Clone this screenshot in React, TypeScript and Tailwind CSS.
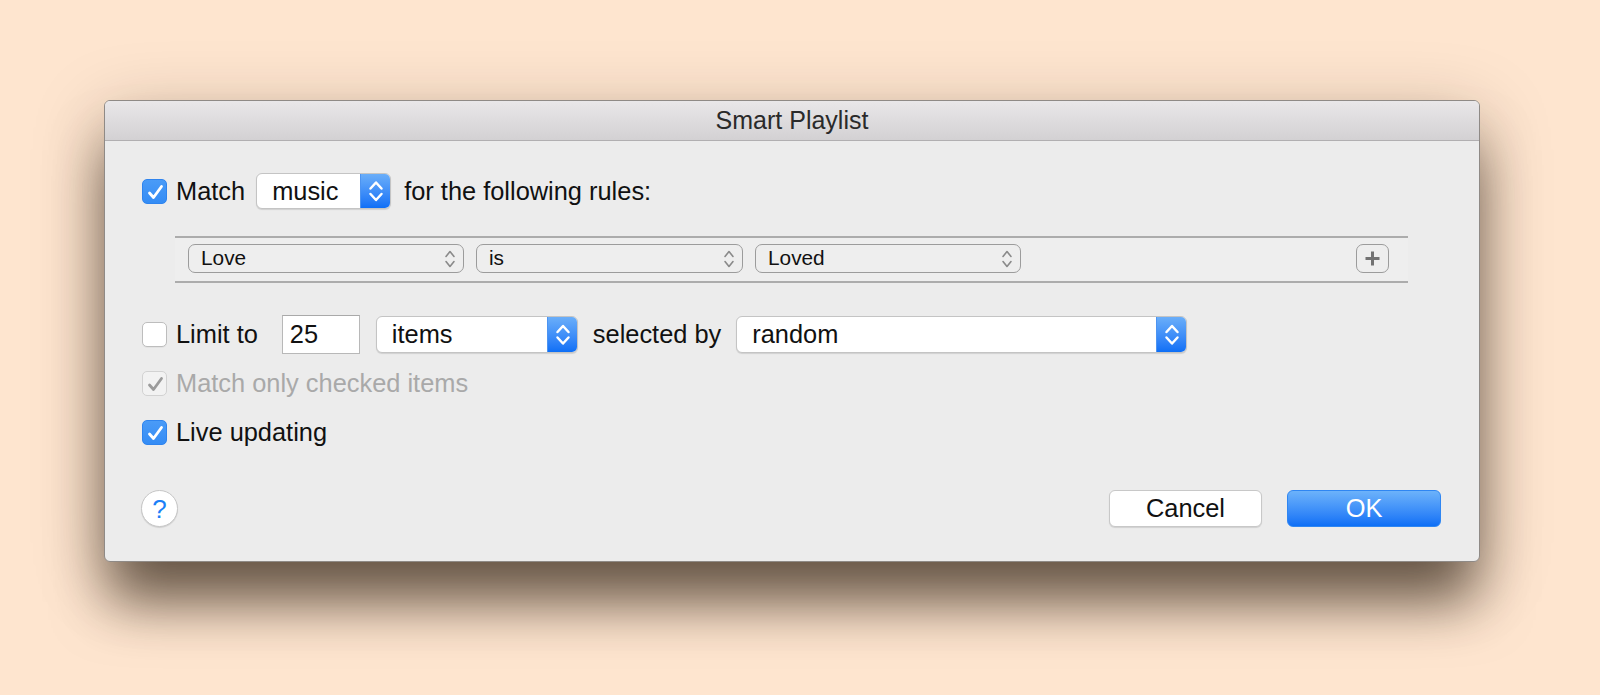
import React from "react";

const FONT = { fontFamily: '"Liberation Sans", Arial, sans-serif' };

function Check({ color = "white" }: { color?: string }) {
  return (
    <svg width="25" height="25" viewBox="0 0 25 25" className="absolute inset-0">
      <path d="M6.5 13 L10.5 17.5 L18.5 6.5" fill="none" stroke={color} strokeWidth="2.8" strokeLinecap="round" strokeLinejoin="round" />
    </svg>
  );
}

function CheckBox({ state }: { state: "on" | "off" | "disabled" }) {
  if (state === "on")
    return (
      <div className="relative w-[25px] h-[25px] shrink-0 rounded-[5px] border border-[#2f84ee] bg-gradient-to-b from-[#4a9bf7] to-[#348cf5]">
        <Check />
      </div>
    );
  if (state === "disabled")
    return (
      <div className="relative w-[25px] h-[25px] shrink-0 rounded-[5px] border border-[#d2d2d2] bg-[#f2f2f2]">
        <Check color="#9b9b9b" />
      </div>
    );
  return <div className="w-[25px] h-[25px] shrink-0 rounded-[5px] border border-[#bdbdbd] bg-white shadow-[0_1px_0_rgba(0,0,0,0.04)]" />;
}

function BlueStepper({ h }: { h: number }) {
  const mid = h / 2;
  return (
    <div className="w-[30px] h-full shrink-0 rounded-r-[5px] bg-gradient-to-b from-[#6aaef9] to-[#0d6ff6] border-l border-[#4d94f1]">
      <svg width="30" height={h} viewBox={`0 0 30 ${h}`}>
        <path d={`M9.5 ${mid - 2.5} L15 ${mid - 8.5} L20.5 ${mid - 2.5}`} fill="none" stroke="white" strokeWidth="2.5" strokeLinecap="round" strokeLinejoin="round" />
        <path d={`M9.5 ${mid + 3} L15 ${mid + 9} L20.5 ${mid + 3}`} fill="none" stroke="white" strokeWidth="2.5" strokeLinecap="round" strokeLinejoin="round" />
      </svg>
    </div>
  );
}

function BluePopup({ label, w, h }: { label: string; w: string; h: number }) {
  return (
    <div
      className={`flex items-stretch ${w} shrink-0 rounded-[6px] bg-white border border-[#c4c4c4] shadow-[0_1px_1px_rgba(0,0,0,0.12)]`}
      style={{ height: h }}
    >
      <div className="flex-1 flex items-center pl-[15px] text-[25.4px] text-[#111]">{label}</div>
      <BlueStepper h={h - 2} />
    </div>
  );
}

function RulePopup({ label, w }: { label: string; w: string }) {
  return (
    <div className={`flex items-center justify-between ${w} h-[29px] shrink-0 rounded-[7px] border-[1.5px] border-[#9c9c9c] pl-[12px] pr-[7px]`}>
      <span className="text-[20.8px] text-[#111] leading-none">{label}</span>
      <svg width="12" height="20" viewBox="0 0 12 20">
        <path d="M2 7.5 L6 2.5 L10 7.5" fill="none" stroke="#8a8a8a" strokeWidth="1.6" strokeLinecap="round" strokeLinejoin="round" />
        <path d="M2 12.5 L6 17.5 L10 12.5" fill="none" stroke="#8a8a8a" strokeWidth="1.6" strokeLinecap="round" strokeLinejoin="round" />
      </svg>
    </div>
  );
}

export default function App() {
  return (
    <div className="w-[1600px] h-[695px] bg-[#fee5cf] pt-[100px] pl-[104px] overflow-hidden" style={FONT}>
      <div className="w-[1376px] rounded-[6px] border border-[#8f8a86] bg-[#ececec] shadow-[0_45px_55px_-5px_rgba(35,22,10,0.62),0_15px_70px_rgba(35,22,10,0.25)] overflow-hidden">
        {/* title bar */}
        <div className="h-[40px] flex items-center justify-center bg-gradient-to-b from-[#e9e7e9] to-[#d3d1d3] border-b border-[#b1afb1]">
          <span className="text-[25px] text-[#2a2a2a] leading-none">Smart Playlist</span>
        </div>

        {/* body */}
        <div className="pl-[37px] pr-[38px] pb-[34px] flex flex-col">
          {/* match row */}
          <div className="mt-[32px] h-[36px] flex items-center">
            <CheckBox state="on" />
            <span className="ml-[9px] text-[25.4px] text-[#111]">Match</span>
            <div className="ml-[11px]">
              <BluePopup label="music" w="w-[135px]" h={36} />
            </div>
            <span className="ml-[13px] text-[25.4px] text-[#111]">for the following rules:</span>
          </div>

          {/* rules box */}
          <div className="mt-[27px] mx-[33px] border-t-2 border-b-2 border-[#acacac] bg-[#eeeeee] h-[47px] flex items-start pt-[6px] pl-[13px] pr-[19px]">
            <RulePopup label="Love" w="w-[276px]" />
            <div className="ml-[12px]">
              <RulePopup label="is" w="w-[267px]" />
            </div>
            <div className="ml-[12px]">
              <RulePopup label="Loved" w="w-[266px]" />
            </div>
            <div className="ml-auto w-[33px] h-[29px] rounded-[7px] border-[1.5px] border-[#9c9c9c] flex items-center justify-center">
              <svg width="15" height="15" viewBox="0 0 15 15">
                <rect x="6" y="0.5" width="3" height="14" fill="#727272" />
                <rect x="0.5" y="6" width="14" height="3" fill="#727272" />
              </svg>
            </div>
          </div>

          {/* limit row */}
          <div className="mt-[32px] h-[39px] flex items-center">
            <CheckBox state="off" />
            <span className="ml-[9px] text-[25.4px] text-[#111]">Limit to</span>
            <div className="ml-[24px] w-[78px] h-[39px] bg-white border border-[#b8b8b8] border-t-[#a9a9a9] flex items-center pl-[7px] text-[25.4px] text-[#111]">
              25
            </div>
            <div className="ml-[16px]">
              <BluePopup label="items" w="w-[202px]" h={37} />
            </div>
            <span className="ml-[15px] text-[25.4px] text-[#111]">selected by</span>
            <div className="ml-[15px]">
              <BluePopup label="random" w="w-[451px]" h={37} />
            </div>
          </div>

          {/* match only checked */}
          <div className="mt-[15px] h-[28px] flex items-center">
            <CheckBox state="disabled" />
            <span className="ml-[9px] text-[25.4px] text-[#a9a9a9]">Match only checked items</span>
          </div>

          {/* live updating */}
          <div className="mt-[21px] h-[28px] flex items-center">
            <CheckBox state="on" />
            <span className="ml-[9px] text-[25.4px] text-[#111]">Live updating</span>
          </div>

          {/* bottom row */}
          <div className="mt-[44px] h-[37px] flex items-center">
            <div className="-ml-[1px] w-[37px] h-[37px] rounded-full bg-white border border-[#c6c6c6] shadow-[0_1px_1px_rgba(0,0,0,0.12)] flex items-center justify-center">
              <span className="text-[26px] leading-none text-[#1b7ff7]">?</span>
            </div>
            <div className="ml-auto w-[153px] h-[37px] rounded-[6px] bg-white border border-[#c8c8c8] shadow-[0_1px_1px_rgba(0,0,0,0.12)] flex items-center justify-center text-[25.4px] text-[#111]">
              Cancel
            </div>
            <div className="ml-[25px] w-[154px] h-[37px] rounded-[6px] bg-gradient-to-b from-[#6cb2fa] to-[#0c6ff6] border border-[#2f86f2] flex items-center justify-center text-[25.4px] text-white">
              OK
            </div>
          </div>
        </div>
      </div>
    </div>
  );
}
